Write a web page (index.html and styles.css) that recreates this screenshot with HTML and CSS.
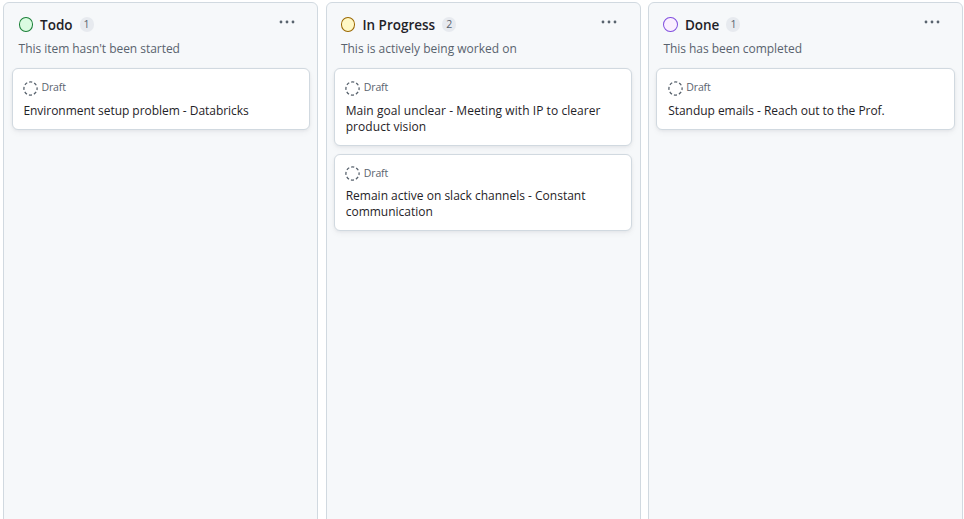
FILE: index.html
```
<!DOCTYPE html>
<html lang="en">
<head>
<meta charset="utf-8">
<title>Project board</title>
<link rel="stylesheet" href="styles.css">
</head>
<body>
<svg class="defs" width="0" height="0">
  <symbol id="draft" viewBox="0 0 15 15"><circle cx="7.5" cy="7.5" r="6.6" fill="none" stroke="#59636e" stroke-width="1.3" stroke-dasharray="3.1 2.084" stroke-dashoffset="1.55"/></symbol>
  <symbol id="more" viewBox="0 0 16 4"><g fill="#59636e"><circle cx="2" cy="2" r="1.4"/><circle cx="8" cy="2" r="1.4"/><circle cx="14" cy="2" r="1.4"/></g></symbol>
</svg>
<main class="board">
  <section class="column">
    <header class="head">
      <i class="dot green"></i><h2>Todo</h2><span class="count">1</span>
      <svg class="more"><use href="#more"/></svg>
    </header>
    <p class="desc tight">This item hasn't been started</p>
    <div class="cards">
      <article class="card"><div class="meta"><svg><use href="#draft"/></svg><span>Draft</span></div><h3 class="tight">Environment setup problem - Databricks</h3></article>
    </div>
  </section>
  <section class="column">
    <header class="head">
      <i class="dot yellow"></i><h2>In Progress</h2><span class="count">2</span>
      <svg class="more"><use href="#more"/></svg>
    </header>
    <p class="desc">This is actively being worked on</p>
    <div class="cards">
      <article class="card"><div class="meta"><svg><use href="#draft"/></svg><span>Draft</span></div><h3 class="loose">Main goal unclear - Meeting with IP to clearer<br>product vision</h3></article>
      <article class="card"><div class="meta"><svg><use href="#draft"/></svg><span>Draft</span></div><h3>Remain active on slack channels - Constant<br>communication</h3></article>
    </div>
  </section>
  <section class="column">
    <header class="head">
      <i class="dot purple"></i><h2>Done</h2><span class="count">1</span>
      <svg class="more"><use href="#more"/></svg>
    </header>
    <p class="desc tight">This has been completed</p>
    <div class="cards">
      <article class="card"><div class="meta"><svg><use href="#draft"/></svg><span>Draft</span></div><h3 class="tight">Standup emails - Reach out to the Prof.</h3></article>
    </div>
  </section>
</main>
</body>
</html>
```
FILE: styles.css
```
* { box-sizing: border-box; margin: 0; padding: 0; }
body { background: #fff; font-family: "Open Sans", "Noto Sans", sans-serif; color: #1f2328; overflow: hidden; }
.defs { display: none; }
.board { display: grid; grid-template-columns: repeat(3, 1fr); gap: 7.5px; height: 527px; padding: 2px 1px 0 3px; }
.column { background: #f6f8fa; border: 1px solid #d1d9e0; border-radius: 6px; padding: 12px 7.5px 0 7.4px; }
.column:first-child { padding-left: 7.6px; }
.head { display: flex; align-items: center; height: 20px; padding-left: 7px; }
.dot { width: 14.5px; height: 15px; margin-top: -1px; border: 1px solid; border-radius: 50%; }
.green { background: #dafbe1; border-color: #1a7f37; }
.yellow { background: #fff8c5; border-color: #9a6700; }
.purple { background: #fbefff; border-color: #8250df; }
h2 { margin-left: 7px; font-size: 13.5px; font-weight: 600; line-height: 20px; white-space: nowrap; }
.count { margin: -1px 0 0 7px; min-width: 14px; height: 15px; border-radius: 8px; background: #e7eaef; color: #59636e; font-size: 10.5px; line-height: 15px; text-align: center; }
.more { width: 16px; height: 4px; margin: -6px 14.7px 0 auto; }
.desc { height: 33px; padding: 4px 0 0 7px; font-size: 12px; line-height: 20px; color: #59636e; white-space: nowrap; }
.cards { display: flex; flex-direction: column; gap: 8px; }
.card { background: #fff; border: 1px solid #d1d9e0; border-radius: 6px; box-shadow: 0 1px 3px rgba(31, 35, 40, .06), 0 3px 6px rgba(31, 35, 40, .04); padding: 10px; }
.meta { display: flex; align-items: center; height: 16px; gap: 3.5px; padding-left: .4px; font-size: 10.5px; letter-spacing: -0.15px; color: #59636e; }
.meta svg { width: 15px; height: 15px; margin-top: 2px; }
.meta span { line-height: 16px; }
h3 { margin: 7.5px 0 0 .8px; font-size: 12px; font-weight: 400; line-height: 16px; white-space: nowrap; }
.tight { letter-spacing: -0.04px; }
.loose { letter-spacing: 0.06px; }
```
